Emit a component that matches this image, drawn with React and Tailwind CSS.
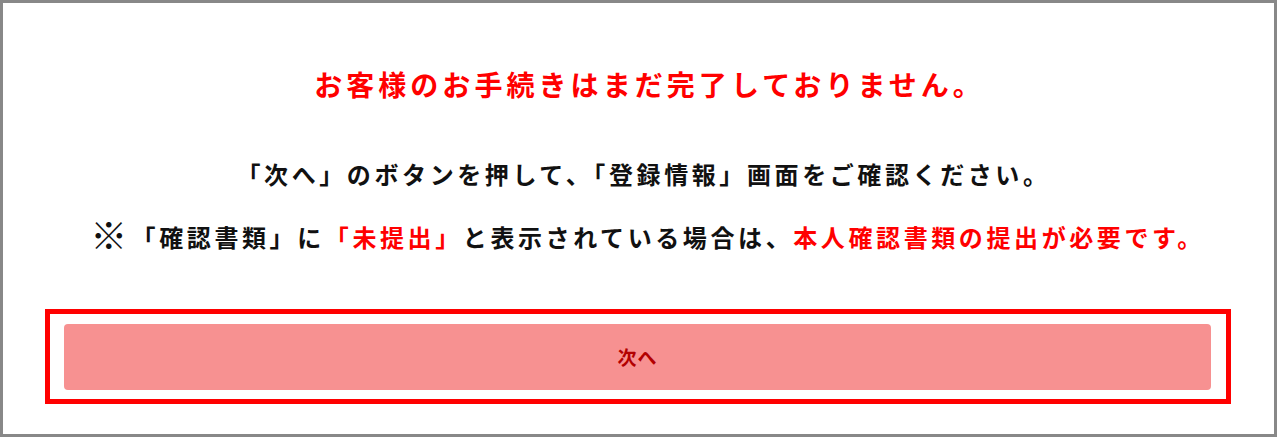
import React from 'react';

const App = () => {
  return (
    <div
      className="w-full h-[437px] border-[3px] border-[#888888] bg-white flex flex-col"
      style={{ fontFamily: '"Noto Sans CJK JP", "Noto Sans", sans-serif' }}
    >
      {/* Heading */}
      <h1 className="mt-[60px] pl-[22px] text-center text-[28px] leading-[42px] font-bold tracking-[0.145em] text-[#ff0000]">
        お客様のお手続きはまだ完了しておりません。
      </h1>

      {/* Message */}
      <div className="mt-[51px] flex flex-col gap-[21px] text-center text-[24px] leading-[36px] font-bold tracking-[0.15em] text-[#111111]">
        <p className="pl-[10px]">「次へ」のボタンを押して、「登録情報」画面をご確認ください。</p>
        <p className="pl-[18px] h-[36px]">
          <span className="inline-block text-[37px] leading-[36px] h-[36px] tracking-[0.12em] translate-y-[3px]">※</span>
          「確認書類」に<span className="text-[#ff0000]">「未提出」</span>と表示されている場合は、
          <span className="text-[#ff0000]">本人確認書類の提出が必要です。</span>
        </p>
      </div>

      {/* Next button, highlighted */}
      <div className="mt-[60px] ml-[42px] mr-[43px] border-[5px] border-[#ff0000] pl-[14px] pr-[15px] pt-[10px] pb-[9px]">
        <button
          type="button"
          className="w-full h-[66px] rounded-[4px] bg-[#f79191] text-[#b30000] text-[19px] font-bold tracking-[0.05em] flex items-center justify-center"
        >
          次へ
        </button>
      </div>
    </div>
  );
};

export default App;
